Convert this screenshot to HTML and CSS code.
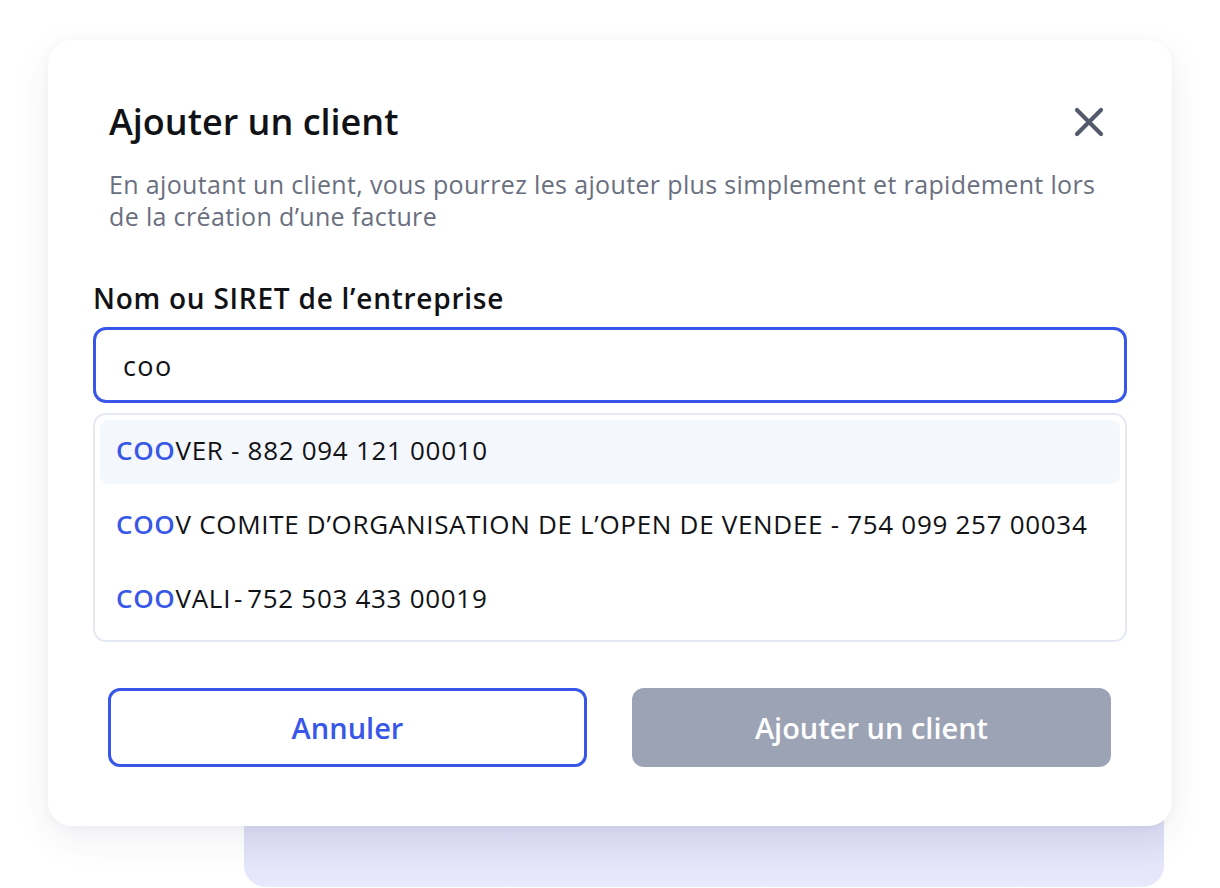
FILE: index.html
```html
<!DOCTYPE html>
<html lang="fr">
<head>
<meta charset="utf-8">
<title>Ajouter un client</title>
<link rel="stylesheet" href="styles.css">
</head>
<body>
<div class="stage">
  <div class="backdrop"></div>
  <div class="card">
    <div class="header">
      <div class="title-row">
        <h1 class="title">Ajouter un client</h1>
        <button class="close" aria-label="Fermer">
          <svg width="32" height="32" viewBox="0 0 32 32"><path d="M4 4 L28 28 M28 4 L4 28" stroke="#545a6c" stroke-width="4.2" stroke-linecap="round" fill="none"/></svg>
        </button>
      </div>
      <p class="subtitle">En ajoutant un client, vous pourrez les ajouter plus simplement et rapidement lors de la création d’une facture</p>
    </div>
    <label class="label">Nom ou SIRET de l’entreprise</label>
    <div class="input">coo</div>
    <ul class="dropdown">
      <li class="item active"><span class="hl">COO</span>VER - 882 094 121 00010</li>
      <li class="item"><span class="hl">COO</span>V COMITE D’ORGANISATION DE L’OPEN DE VENDEE - 754 099 257 00034</li>
      <li class="item"><span class="hl">COO</span>VALI<span class="tight">-</span>752 503 433 00019</li>
    </ul>
    <div class="actions">
      <button class="btn btn-outline">Annuler</button>
      <button class="btn btn-disabled">Ajouter un client</button>
    </div>
  </div>
</div>
</body>
</html>
```
FILE: styles.css
```css
* { box-sizing: border-box; }
html, body { margin: 0; padding: 0; background: #ffffff; }
body {
  font-family: "Open Sans", Lato, sans-serif;
  color: #111216;
  width: 1220px;
  height: 888px;
  overflow: hidden;
}
.stage {
  position: relative;
  padding: 40px 0 0 48px;
}
.backdrop {
  position: absolute;
  left: 244px;
  top: 700px;
  width: 920px;
  height: 187px;
  border-radius: 22px;
  background: linear-gradient(180deg, #d6d6f0 0%, #dcdcf4 65%, #e9e9fd 100%);
}
.card {
  position: relative;
  width: 1124px;
  height: 786px;
  background: #ffffff;
  border-radius: 24px;
  box-shadow: 0 12px 36px rgba(40, 50, 90, 0.08), 0 2px 10px rgba(40, 50, 90, 0.03);
  padding: 62px 45px 0 45px;
}
.header { padding: 0 17px 0 16px; }
.title-row {
  display: flex;
  align-items: center;
  justify-content: space-between;
  height: 40px;
}
.title {
  margin: 0;
  font-size: 36px;
  line-height: 40px;
  font-weight: 600;
  letter-spacing: 0;
  color: #111216;
}
.close {
  border: 0;
  background: none;
  padding: 0;
  width: 32px;
  height: 32px;
  margin-right: 5px;
  display: flex;
}
.subtitle {
  margin: 26px 0 0 0;
  font-size: 25px;
  line-height: 32px;
  color: #6a6f80;
  font-weight: 400;
  letter-spacing: 0.35px;
}
.label {
  display: block;
  margin-top: 50px;
  font-size: 28px;
  line-height: 32px;
  font-weight: 600;
  letter-spacing: 0.75px;
  color: #111216;
}
.input {
  margin-top: 13px;
  height: 76px;
  border: 3px solid #3857e8;
  border-radius: 13px;
  padding: 0 27px;
  display: flex;
  align-items: center;
  font-size: 27px;
  letter-spacing: 1.4px;
  color: #111216;
}
.dropdown {
  list-style: none;
  margin: 10px 0 0 0;
  padding: 5px 5px 8px 5px;
  border: 2px solid #e4e8f2;
  border-radius: 13px;
  display: flex;
  flex-direction: column;
  gap: 10px;
}
.item {
  height: 64px;
  border-radius: 9px;
  display: flex;
  align-items: center;
  padding: 0 16px 4px 16px;
  font-size: 26px;
  letter-spacing: 0.7px;
  color: #111216;
  white-space: pre;
}
.item.active { background: #f4f7fc; }
.hl { color: #3858e8; font-weight: 600; }
.tight { margin: 0 4px 0 3px; }
.actions {
  margin-top: 46px;
  padding: 0 15px;
  display: flex;
  gap: 45px;
}
.btn {
  width: 479px;
  height: 79px;
  border-radius: 12px;
  font-family: inherit;
  font-size: 29px;
  font-weight: 600;
  letter-spacing: 0;
}
.btn-outline {
  background: #ffffff;
  border: 3px solid #3857e8;
  color: #3857e8;
}
.btn-disabled {
  background: #9ca3b4;
  border: 0;
  color: #ffffff;
}
```
